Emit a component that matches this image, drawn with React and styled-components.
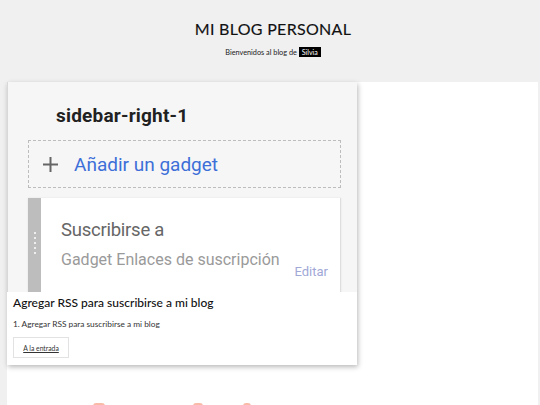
import React from "react";
import styled, { createGlobalStyle } from "styled-components";

const Global = createGlobalStyle`
  html, body { margin: 0; padding: 0; }
  body { background: #f0f0f1; font-family: "Lato", "Open Sans", sans-serif; overflow: hidden; }
`;

const Page = styled.div`
  width: 540px;
  height: 405px;
  display: flex;
  flex-direction: column;
  overflow: hidden;
`;

const Header = styled.header`
  height: 82px;
  flex-shrink: 0;
  display: flex;
  flex-direction: column;
  align-items: center;
  padding-top: 19px;
  box-sizing: border-box;
  padding-left: 6px;
`;

const BlogTitle = styled.h1`
  margin: 0;
  font-family: "Lato", sans-serif;
  font-weight: 400;
  font-size: 16px;
  letter-spacing: 0.3px;
  color: #111;
  line-height: 20px;
  -webkit-text-stroke: 0.15px #111;
`;

const Welcome = styled.div`
  margin-top: 8px;
  font-size: 7.3px;
  color: #222;
  display: flex;
  align-items: center;
  gap: 2px;
`;

const NameTag = styled.span`
  background: #000;
  color: #fff;
  padding: 1px 3px;
  font-size: 7px;
`;

const Main = styled.main`
  flex: 1;
  margin: 0 2px 0 7px;
  background: #fff;
  position: relative;
`;

const Card = styled.article`
  width: 350px;
  background: #fff;
  box-shadow: 1px 2px 5px rgba(0, 0, 0, 0.28);
  display: flex;
  flex-direction: column;
`;

const Shot = styled.div`
  height: 210px;
  flex-shrink: 0;
  background: #f6f6f7;
  overflow: hidden;
  padding: 22px 16px 0 20px;
  box-sizing: border-box;
  display: flex;
  flex-direction: column;
  border-left: 1px solid #d8d8d8;
`;

const SectionName = styled.div`
  flex-shrink: 0;
  font-family: "Roboto", sans-serif;
  font-weight: 700;
  font-size: 19px;
  letter-spacing: 0.2px;
  color: #212121;
  margin-left: 28px;
  line-height: 24px;
`;

const AddGadget = styled.div`
  flex-shrink: 0;
  margin-top: 12px;
  height: 48px;
  border: 1px dashed #bdbdbd;
  display: flex;
  align-items: center;
  padding-left: 14px;
  gap: 16px;
  box-sizing: border-box;
`;

const AddText = styled.span`
  font-family: "Roboto", sans-serif;
  font-size: 19px;
  color: #3d6fd8;
`;

const Gadget = styled.div`
  flex-shrink: 0;
  margin-top: 10px;
  height: 110px;
  background: #fff;
  display: flex;
  border-right: 1px solid #dedede;
  box-shadow: 0 0 2px rgba(0, 0, 0, 0.08);
`;

const Handle = styled.div`
  width: 13px;
  background: #bdbdbd;
  display: flex;
  flex-direction: column;
  align-items: center;
  padding-top: 34px;
  gap: 3px;
  box-sizing: border-box;
`;

const Dot = styled.span`
  width: 2px;
  height: 2px;
  background: #fff;
  border-radius: 1px;
`;

const GadgetBody = styled.div`
  flex: 1;
  padding: 20px 12px 0 20px;
  display: flex;
  flex-direction: column;
`;

const GadgetTitle = styled.div`
  font-family: "Roboto", sans-serif;
  font-size: 18.5px;
  letter-spacing: -0.25px;
  color: #666;
  line-height: 24px;
`;

const GadgetRow = styled.div`
  margin-top: 8px;
  display: flex;
  justify-content: space-between;
  align-items: flex-end;
`;

const GadgetSub = styled.div`
  font-family: "Roboto", sans-serif;
  font-size: 16px;
  color: #9a9a9a;
  line-height: 20px;
`;

const EditLink = styled.span`
  font-family: "Roboto", sans-serif;
  font-size: 13px;
  color: #9fa8d6;
  margin-bottom: -9px;
`;

const Body = styled.div`
  padding: 3px 6px 7px 6px;
  display: flex;
  flex-direction: column;
  align-items: flex-start;
`;

const PostTitle = styled.h2`
  margin: 0;
  font-family: "Lato", sans-serif;
  font-weight: 500;
  font-size: 12px;
  color: #111;
  line-height: 16px;
`;

const Snippet = styled.p`
  margin: 8px 0 0;
  font-size: 8.3px;
  color: #333;
  line-height: 10px;
`;

const MoreButton = styled.a`
  margin-top: 8px;
  width: 56px;
  height: 21px;
  box-sizing: border-box;
  border: 1px solid #e2e2e2;
  display: flex;
  align-items: center;
  justify-content: center;
  font-size: 6.8px;
  color: #333;
  text-decoration: underline;
`;

const Peek = styled.span`
  position: absolute;
  bottom: -4px;
  left: ${(p) => p.x}px;
  width: ${(p) => p.w}px;
  height: 6px;
  border-radius: 3px;
  background: #f7a48a;
  opacity: 0.75;
`;

const Plus = () => (
  <svg width="15" height="15" viewBox="0 0 15 15">
    <path d="M7.5 0v15M0 7.5h15" stroke="#666" strokeWidth="2" />
  </svg>
);

export default function App() {
  return (
    <Page>
      <Global />
      <Header>
        <BlogTitle>MI BLOG PERSONAL</BlogTitle>
        <Welcome>
          Bienvenidos al blog de <NameTag>Silvia</NameTag>
        </Welcome>
      </Header>
      <Main>
        <Card>
          <Shot>
            <SectionName>sidebar-right-1</SectionName>
            <AddGadget>
              <Plus />
              <AddText>Añadir un gadget</AddText>
            </AddGadget>
            <Gadget>
              <Handle>
                {[0, 1, 2, 3, 4].map((i) => (
                  <Dot key={i} />
                ))}
              </Handle>
              <GadgetBody>
                <GadgetTitle>Suscribirse a</GadgetTitle>
                <GadgetRow>
                  <GadgetSub>Gadget Enlaces de suscripción</GadgetSub>
                  <EditLink>Editar</EditLink>
                </GadgetRow>
              </GadgetBody>
            </Gadget>
          </Shot>
          <Body>
            <PostTitle>Agregar RSS para suscribirse a mi blog</PostTitle>
            <Snippet>1. Agregar RSS para suscribirse a mi blog</Snippet>
            <MoreButton>A la entrada</MoreButton>
          </Body>
        </Card>
        <Peek x={86} w={12} />
        <Peek x={186} w={10} />
        <Peek x={236} w={8} />
      </Main>
    </Page>
  );
}
